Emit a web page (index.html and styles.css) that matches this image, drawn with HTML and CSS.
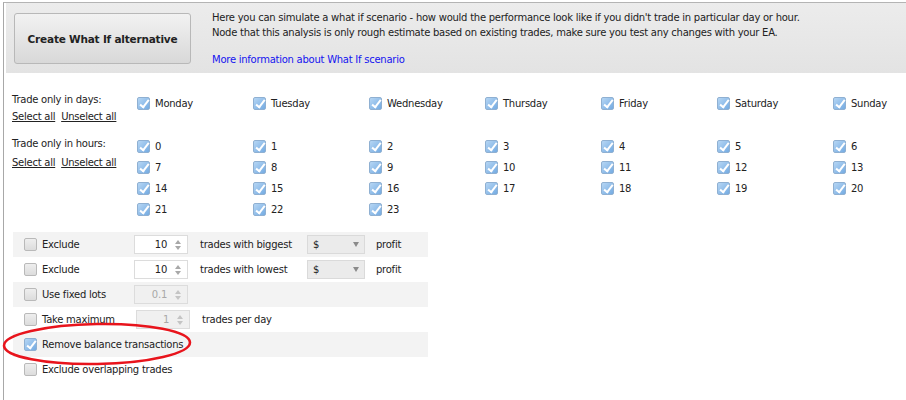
FILE: index.html
```html
<!DOCTYPE html>
<html lang="en">
<head>
  <meta charset="UTF-8">
  <title>What If</title>
  <link rel="stylesheet" href="styles.css">
</head>
<body>
<div class="frame">

  <div class="header">
    <button class="create-btn">Create What If alternative</button>
    <div class="intro">
      <p>Here you can simulate a what if scenario - how would the performance look like if you didn't trade in particular day or hour.</p>
      <p>Node that this analysis is only rough estimate based on existing trades, make sure you test any changes with your EA.</p>
      <a class="more" href="#">More information about What If scenario</a>
    </div>
  </div>

  <div class="filter days">
    <div class="filter-label">
      <div>Trade only in days:</div>
      <div class="links"><a href="#">Select all</a> <a href="#">Unselect all</a></div>
    </div>
    <div class="check-grid">
      <label class="item"><span class="cb on"></span>Monday</label>
      <label class="item"><span class="cb on"></span>Tuesday</label>
      <label class="item"><span class="cb on"></span>Wednesday</label>
      <label class="item"><span class="cb on"></span>Thursday</label>
      <label class="item"><span class="cb on"></span>Friday</label>
      <label class="item"><span class="cb on"></span>Saturday</label>
      <label class="item"><span class="cb on"></span>Sunday</label>
    </div>
  </div>

  <div class="filter hours">
    <div class="filter-label">
      <div>Trade only in hours:</div>
      <div class="links"><a href="#">Select all</a> <a href="#">Unselect all</a></div>
    </div>
    <div class="check-grid">
      <label class="item"><span class="cb on"></span>0</label>
      <label class="item"><span class="cb on"></span>1</label>
      <label class="item"><span class="cb on"></span>2</label>
      <label class="item"><span class="cb on"></span>3</label>
      <label class="item"><span class="cb on"></span>4</label>
      <label class="item"><span class="cb on"></span>5</label>
      <label class="item"><span class="cb on"></span>6</label>
      <label class="item"><span class="cb on"></span>7</label>
      <label class="item"><span class="cb on"></span>8</label>
      <label class="item"><span class="cb on"></span>9</label>
      <label class="item"><span class="cb on"></span>10</label>
      <label class="item"><span class="cb on"></span>11</label>
      <label class="item"><span class="cb on"></span>12</label>
      <label class="item"><span class="cb on"></span>13</label>
      <label class="item"><span class="cb on"></span>14</label>
      <label class="item"><span class="cb on"></span>15</label>
      <label class="item"><span class="cb on"></span>16</label>
      <label class="item"><span class="cb on"></span>17</label>
      <label class="item"><span class="cb on"></span>18</label>
      <label class="item"><span class="cb on"></span>19</label>
      <label class="item"><span class="cb on"></span>20</label>
      <label class="item"><span class="cb on"></span>21</label>
      <label class="item"><span class="cb on"></span>22</label>
      <label class="item"><span class="cb on"></span>23</label>
    </div>
  </div>

  <div class="options">
    <div class="opt">
      <label class="opt-name"><span class="cb"></span>Exclude</label>
      <div class="spin"><span class="val">10</span><span class="arrows"></span></div>
      <span class="opt-text">trades with biggest</span>
      <div class="select"><span>$</span><span class="caret"></span></div>
      <span class="opt-tail">profit</span>
    </div>
    <div class="opt">
      <label class="opt-name"><span class="cb"></span>Exclude</label>
      <div class="spin"><span class="val">10</span><span class="arrows"></span></div>
      <span class="opt-text">trades with lowest</span>
      <div class="select"><span>$</span><span class="caret"></span></div>
      <span class="opt-tail">profit</span>
    </div>
    <div class="opt">
      <label class="opt-name"><span class="cb"></span>Use fixed lots</label>
      <div class="spin disabled"><span class="val">0.1</span><span class="arrows"></span></div>
    </div>
    <div class="opt">
      <label class="opt-name"><span class="cb"></span>Take maximum</label>
      <div class="spin disabled shifted"><span class="val">1</span><span class="arrows"></span></div>
      <span class="opt-text">trades per day</span>
    </div>
    <div class="opt">
      <label class="opt-name wide"><span class="cb on"></span>Remove balance transactions</label>
    </div>
    <div class="opt">
      <label class="opt-name wide"><span class="cb"></span>Exclude overlapping trades</label>
    </div>
  </div>

  <svg class="highlight" width="200" height="60" viewBox="0 0 200 60">
    <ellipse cx="96" cy="30" rx="93" ry="20" fill="none" stroke="#e8141c" stroke-width="2.6" transform="rotate(-1 96 30)"/>
  </svg>
</div>
</body>
</html>
```

FILE: styles.css
```css
* { box-sizing: border-box; }
body { margin: 0; font-family: "DejaVu Sans", Verdana, sans-serif; font-size: 10px; letter-spacing: -0.25px; color: #222; background: #fff; }
a { color: #222; }
p { margin: 0; }

.frame { position: relative; margin: 2px 0 0 3px; height: 398px; border-top: 1px solid #b4b4b4; border-left: 1px solid #a8a8a8; }

.header { display: flex; align-items: flex-start; height: 70px; margin-left: 2px; padding: 7px 0 0 8px; background: linear-gradient(#ececec, #e3e3e3); }
.create-btn { flex: none; width: 177px; height: 51px; margin-top: 3px; border: 1px solid #b8b8b8; border-radius: 3px; background: linear-gradient(#f2f2f2, #d8d8d8); font-family: "DejaVu Sans", Verdana, sans-serif; font-size: 10.5px; letter-spacing: -0.2px; font-weight: bold; color: #222; cursor: pointer; }
.intro { margin-left: 21px; line-height: 15px; }
.intro .more { display: block; margin-top: 12px; color: #1414f0; text-decoration: none; }

.filter { display: flex; padding-left: 8px; }
.filter.days { margin-top: 20px; }
.filter.hours { margin-top: 12px; }
.filter-label { flex: none; width: 125px; line-height: 14px; }
.filter-label .links a { margin-right: 3px; }
.days .filter-label .links { margin-top: 3px; }
.hours .filter-label { padding-top: 1px; }
.hours .filter-label .links { margin-top: 5px; }
.check-grid { display: grid; grid-template-columns: repeat(7, 116px); }
.item { display: flex; align-items: center; gap: 5px; height: 21px; }

.cb { position: relative; width: 13px; height: 13px; border: 1px solid #b9b9b9; border-radius: 2px; background: linear-gradient(#eeeeee, #dcdcdc); flex: none; }
.cb.on { border-color: #8fb0d2; background: linear-gradient(135deg, #b6d6f4, #74abe2); }
.cb.on::after { content: ""; position: absolute; left: 4px; top: 0px; width: 3px; height: 8px; border-right: 2px solid #fff; border-bottom: 2px solid #fff; transform: rotate(38deg); }

.options { width: 415px; margin: 12px 0 0 9px; }
.opt { display: flex; align-items: center; height: 25px; padding-left: 11px; }
.opt:nth-child(odd) { background: #f3f3f3; }
.opt-name { flex: none; display: flex; align-items: center; gap: 5px; width: 110px; }
.opt-name.wide { width: auto; }
.spin { flex: none; display: flex; align-items: center; justify-content: flex-end; width: 54px; height: 19px; padding-right: 5px; border: 1px solid #dcdcdc; background: #fff; }
.spin.shifted { margin-left: 2px; }
.spin .val { margin-right: 8px; }
.spin .arrows { position: relative; width: 7px; height: 10px; }
.spin .arrows::before, .spin .arrows::after { content: ""; position: absolute; left: 0; border-left: 3px solid transparent; border-right: 3px solid transparent; }
.spin .arrows::before { top: 0; border-bottom: 4px solid #a8a8a8; }
.spin .arrows::after { bottom: 0; border-top: 4px solid #a8a8a8; }
.spin.disabled { background: #f0f0f0; color: #a8a8a8; }
.spin.disabled .arrows::before { border-bottom-color: #c4c4c4; }
.spin.disabled .arrows::after { border-top-color: #c4c4c4; }
.opt-text { flex: none; width: 107px; margin-left: 12px; }
.select { flex: none; display: flex; align-items: center; justify-content: space-between; width: 58px; height: 19px; padding: 0 5px; border: 1px solid #dadada; background: #ebebeb; }
.select .caret { border-left: 3.5px solid transparent; border-right: 3.5px solid transparent; border-top: 5px solid #8a8a8a; }
.opt-tail { margin-left: 11px; }

.highlight { position: absolute; left: -3px; top: 311px; }
```
